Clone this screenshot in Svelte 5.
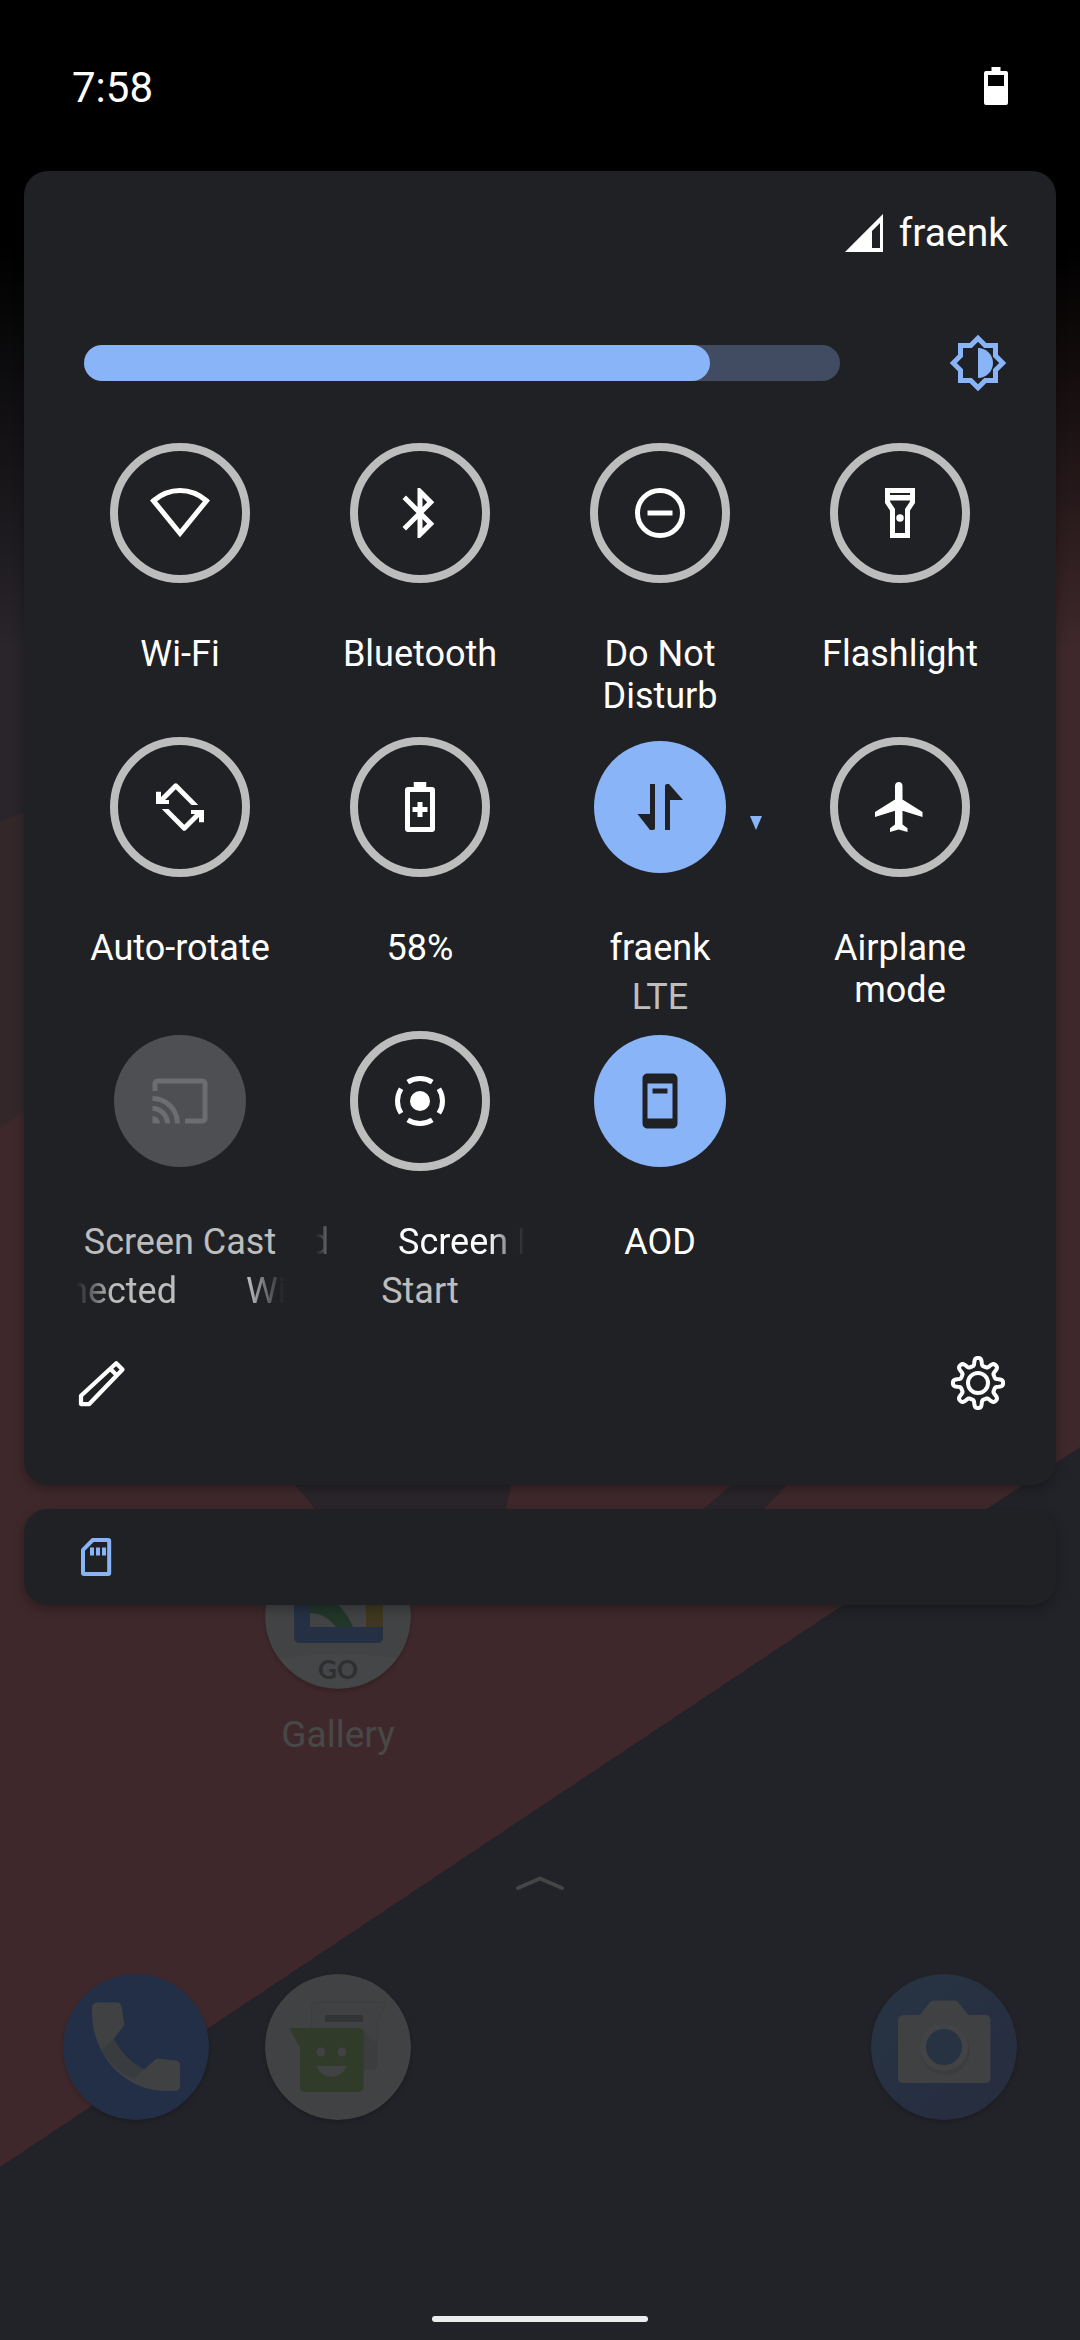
<script lang="ts">
  // A label too long for its tile scrolls; `tail` and `head` are the parts in view
  // of the copy going out and the copy coming in, `offset` is how far the tail reaches.
  type Marquee = { tail: string; head: string; offset: number };

  type Tile = {
    id: string;
    label: string;
    state: 'off' | 'on' | 'unavailable';
    secondary?: string;
    labelScroll?: Marquee;
    secondaryScroll?: Marquee;
    menu?: boolean;
  };

  const tiles: Tile[] = [
    { id: 'wifi', label: 'Wi-Fi', state: 'off' },
    { id: 'bluetooth', label: 'Bluetooth', state: 'off' },
    { id: 'dnd', label: 'Do Not Disturb', state: 'off' },
    { id: 'flashlight', label: 'Flashlight', state: 'off' },
    { id: 'rotate', label: 'Auto-rotate', state: 'off' },
    { id: 'battery', label: '58%', state: 'off' },
    { id: 'data', label: 'fraenk', secondary: 'LTE', state: 'on', menu: true },
    { id: 'airplane', label: 'Airplane mode', state: 'off' },
    {
      id: 'cast',
      label: 'Screen Cast',
      secondary: 'Wi-Fi not connected',
      secondaryScroll: { tail: 'nected', head: 'Wi', offset: 101 },
      state: 'unavailable'
    },
    {
      id: 'record',
      label: 'Screen Record',
      labelScroll: { tail: 'd', head: 'Screen R', offset: 13 },
      secondary: 'Start',
      state: 'off'
    },
    { id: 'aod', label: 'AOD', state: 'on' }
  ];

  let brightness = $state(82);

  // Eight-toothed gear outline, traced in polar coordinates round (30, 30)
  function gearPath(): string {
    const points: string[] = [];
    for (let i = 0; i < 320; i++) {
      const a = (i / 320) * Math.PI * 2;
      const r = 21.4 + 3.9 * Math.tanh(2.2 * (Math.cos(8 * a) - 0.2));
      points.push(`${(30 + r * Math.sin(a)).toFixed(2)} ${(30 - r * Math.cos(a)).toFixed(2)}`);
    }
    return `M${points.join('L')}Z`;
  }
  const gear = gearPath();
</script>

{#snippet tileIcon(id: string)}
  <svg class="icon" viewBox="0 0 24 24" aria-hidden="true">
    {#if id === 'wifi'}
      <path d="M1.4 7.1C4.3 4.6 8 3 12 3s7.7 1.6 10.6 4.1L12 20.1z" fill="none" stroke="currentColor" stroke-width="2" />
    {:else if id === 'bluetooth'}
      <path d="M17.71 7.71L12 2h-1v7.59L6.41 5 5 6.41 10.59 12 5 17.59 6.41 19 11 14.41V22h1l5.71-5.71-4.3-4.29zM13 5.83l1.88 1.88L13 9.59zm1.88 10.46L13 18.17v-3.76z" />
    {:else if id === 'dnd'}
      <circle cx="12" cy="12" r="9" fill="none" stroke="currentColor" stroke-width="2" />
      <path d="M7 11h10v2H7z" />
    {:else if id === 'flashlight'}
      <path d="M18 2H6v6l2 3v11h8V11l2-3zm-2 2v.8H8V4zm-2 6.4V20h-4v-9.600L8 7.400V7h8v.4z" />
      <circle cx="12" cy="14" r="1.500" />
    {:else if id === 'rotate'}
      <path d="M2.4 5.9h2V8l5.2-5.2a1 1 0 0 1 1.4 0l8.3 8.4h-2.7l-6.3-6.3L6 9.2h1.6v1.6H2.4z" />
      <path d="M2.4 5.9h2V8l5.2-5.2a1 1 0 0 1 1.4 0l8.3 8.4h-2.7l-6.3-6.3L6 9.2h1.6v1.6H2.4z" transform="rotate(180 12 12)" />
    {:else if id === 'battery'}
      <path d="M16.8 4h-2.3V2h-5v2H7.2C6.5 4 6 4.5 6 5.2v15.6c0 .7.5 1.2 1.2 1.2h9.6c.7 0 1.2-.5 1.2-1.2V5.2c0-.7-.5-1.2-1.2-1.2zM16 20H8V6h8z" />
      <path d="M11 10h2v2h2v2h-2v2h-2v-2H9v-2h2z" />
    {:else if id === 'data'}
      <path d="M8 2.8h2v17.6q0 .8-.8.8H8L3 14.8h5z" />
      <path d="M14 21.2V3.6q0-.8.8-.8h.8l5.6 6.4H16v12z" />
    {:else if id === 'airplane'}
      <path d="M21 16v-2l-8-5V3.500c0-.83-.67-1.500-1.500-1.500S10 2.670 10 3.500V9l-8 5v2l8-2.500V19l-2 1.500V22l3.500-1 3.500 1v-1.500L13 19v-5.500z" />
    {:else if id === 'cast'}
      <path d="M21 3H3c-1.1 0-2 .9-2 2v3h2V5h18v14h-7v2h7c1.1 0 2-.9 2-2V5c0-1.1-.9-2-2-2zM1 18v3h3c0-1.66-1.34-3-3-3zm0-4v2c2.76 0 5 2.24 5 5h2c0-3.87-3.13-7-7-7zm0-4v2c4.97 0 9 4.03 9 9h2c0-6.08-4.93-11-11-11z" />
    {:else if id === 'record'}
      <circle cx="12" cy="12" r="4" />
      <path d="M7.1 4.45A9 9 0 0 1 16.9 4.45M19.55 7.1A9 9 0 0 1 19.55 16.9M16.9 19.55A9 9 0 0 1 7.1 19.55M4.45 16.9A9 9 0 0 1 4.45 7.1" fill="none" stroke="currentColor" stroke-width="2" />
    {:else if id === 'aod'}
      <path fill-rule="evenodd" d="M7 1h10c1.1 0 2 .9 2 2v18c0 1.1-.9 2-2 2H7c-1.1 0-2-.9-2-2V3c0-1.1.9-2 2-2zm0 4v14h10V5zm2 2h6v2H9z" />
    {/if}
  </svg>
{/snippet}

{#snippet line(text: string, scroll: Marquee | undefined)}
  {#if scroll}
    <span class="marquee">
      <span class="outgoing" style="width: {scroll.offset}px">{scroll.tail}</span>
      <span>{scroll.head}</span>
    </span>
  {:else}
    <span class="text">{text}</span>
  {/if}
{/snippet}

<div class="screen">
  <svg class="wallpaper" viewBox="0 0 1080 2340" preserveAspectRatio="none" aria-hidden="true">
    <defs>
      <linearGradient id="fade" x1="0" y1="0" x2="0" y2="2340" gradientUnits="userSpaceOnUse">
        <stop offset="0.105" stop-color="#000" />
        <stop offset="0.278" stop-color="#000" stop-opacity="0" />
      </linearGradient>
    </defs>
    <path d="M0 0H1080V2340H0z" fill="#222328" />
    <path d="M0 0H1080V1447L0 2167z" fill="#3e282b" />
    <path d="M0 0H600V700L0 1128z" fill="#33272a" />
    <path d="M0 0H600V570L0 822z" fill="#29252b" />
    <path d="M280 1467H515L506 1509 500 1536H338z" fill="#29252a" />
    <path d="M731 1485L752 1467H804L764 1509 738 1536H672z" fill="#29252a" />
    <path d="M0 0H1080V700H0z" fill="url(#fade)" />
  </svg>

  <main class="launcher">
    <div class="apps">
      <a class="app gallery" href="#gallery">
        <svg viewBox="0 0 146 146" aria-hidden="true">
          <circle cx="73" cy="73" r="73" fill="#414344" />
          <path d="M29 29h89v66a5 5 0 0 1-5 5H34a5 5 0 0 1-5-5z" fill="#253045" />
          <path d="M45 45h56v39H45z" fill="#414344" />
          <path d="M101 29h17v55h-17z" fill="#3f371f" />
          <path d="M45 46C63 50 80 64 88 84H71C65 76 56 70 45 70z" fill="#22362a" />
          <path d="M14 115Q73 107 132 115A73 73 0 0 1 14 115z" fill="#444647" />
          <text x="73" y="136" text-anchor="middle" class="go">GO</text>
        </svg>
        <span>Gallery</span>
      </a>
    </div>
    <svg class="handle" viewBox="0 0 54 24" aria-hidden="true">
      <path d="M5 18L27 8.500 49 18" fill="none" stroke="#444547" stroke-width="4" stroke-linecap="round" stroke-linejoin="round" />
    </svg>
    <nav class="dock" aria-label="Favorites">
      <a class="app phone" href="#phone" aria-label="Phone">
        <svg viewBox="0 0 146 146" aria-hidden="true">
          <circle cx="73" cy="73" r="73" fill="#232f47" />
          <path d="M35 28.500H54q4 0 4.500 4L61.500 51 50.500 65Q62 86 81 95.500L93.500 84.500 113 86.500q4 .5 4 4.500v21q0 5-5 5H103C62 117 29 82 29 38v-4q0-5.500 6-5.500z" fill="#404142" />
          <path d="M38 76L50.500 65Q62 86 81 95.500L71 105.500Q50 96 38 76z" fill="#393c3e" />
        </svg>
      </a>
      <a class="app messages" href="#messages" aria-label="Messages">
        <svg viewBox="0 0 146 146" aria-hidden="true">
          <circle cx="73" cy="73" r="73" fill="#414243" />
          <path d="M51 28h70q1 0 .5 1.500L112 48v42q0 5-5 5H51q-4.500 0-4.500-5V33q0-5 4.500-5z" fill="#3f4142" stroke="#3c3e3f" />
          <path d="M60 41h38v7H60z" fill="#333435" />
          <path d="M98 56l14 14v20q0 5-5 5h-9z" fill="#3b3d3e" />
          <path d="M24.500 54H93q5.500 0 5.500 5v54q0 5-5 5H40q-5 0-5-5V74z" fill="#303b29" />
          <circle cx="56" cy="78" r="4.500" fill="#414243" />
          <circle cx="77" cy="78" r="4.500" fill="#414243" />
          <path d="M51.500 92h30Q77 103 66.500 103T51.500 92z" fill="#414243" />
        </svg>
      </a>
      <a class="app camera" href="#camera" aria-label="Camera">
        <svg viewBox="0 0 146 146" aria-hidden="true">
          <defs>
            <linearGradient id="lens" x1="0" y1="0" x2="1" y2="1">
              <stop offset="0.3" stop-color="#273242" />
              <stop offset="0.7" stop-color="#262e40" />
            </linearGradient>
          </defs>
          <circle cx="73" cy="73" r="73" fill="url(#lens)" />
          <path d="M33 41H48.500L59 28q1.500-1.500 3-1.500H84q2 0 3 1.500L97.500 41H114q5.500 0 5.500 5.500v57q0 5.500-5.500 5.500H33q-6 0-6-5.500v-57q0-5.500 6-5.500z" fill="#404142" />
          <circle cx="74" cy="76" r="25" fill="#3c3d3e" />
          <circle cx="73" cy="73" r="24" fill="#424344" />
          <circle cx="73" cy="73" r="18" fill="#273242" />
        </svg>
      </a>
    </nav>
    <div class="gesture"></div>
  </main>

  <div class="shade">
    <header class="status">
      <time>7:58</time>
      <svg class="battery" viewBox="0 0 24 38" aria-label="Battery 58%" role="img">
        <path fill-rule="evenodd" d="M7.500 0h9v4H22q2 0 2 2v30q0 2-2 2H2q-2 0-2-2V6q0-2 2-2H7.500zM4 8v11h16V8z" />
      </svg>
    </header>

    <section class="panel" aria-label="Quick settings">
      <div class="carrier">
        <svg viewBox="0 0 38 38" aria-hidden="true">
          <path fill-rule="evenodd" d="M0 38L38 0V38zM27 17V34H35V9z" />
        </svg>
        <span>fraenk</span>
      </div>

      <div class="brightness">
        <input type="range" min="0" max="100" bind:value={brightness} style="--level: {brightness / 100}" aria-label="Brightness" />
        <button class="plain accent" aria-label="Adaptive brightness">
          <svg class="icon" viewBox="0 0 24 24" aria-hidden="true">
            <path fill-rule="evenodd" d="M20 8.690V4h-4.690L12 .69 8.690 4H4v4.690L.69 12 4 15.310V20h4.690L12 23.310 15.310 20H20v-4.690L23.310 12zM18 14.480V18h-3.520L12 20.480 9.520 18H6v-3.520L3.520 12 6 9.520V6h3.520L12 3.520 14.480 6H18v3.520L20.480 12z" />
            <path d="M12 6v12c3.310 0 6-2.690 6-6s-2.690-6-6-6z" />
          </svg>
        </button>
      </div>

      <div class="tiles">
        {#each tiles as tile (tile.id)}
          <button
            class="tile {tile.state}"
            aria-label={tile.secondary ? `${tile.label}, ${tile.secondary}` : tile.label}
            aria-pressed={tile.state === 'on'}
            disabled={tile.state === 'unavailable'}
          >
            <span class="slot">
              <span class="disc">{@render tileIcon(tile.id)}</span>
              {#if tile.menu}
                <svg class="caret" viewBox="0 0 12 14" aria-hidden="true"><path d="M0 0H12L6 14z" /></svg>
              {/if}
            </span>
            <span class="label">{@render line(tile.label, tile.labelScroll)}</span>
            {#if tile.secondary}
              <span class="secondary">{@render line(tile.secondary, tile.secondaryScroll)}</span>
            {/if}
          </button>
        {/each}
      </div>

      <footer class="actions">
        <button class="plain" aria-label="Edit tiles">
          <svg class="icon" viewBox="0 0 24 24" aria-hidden="true">
            <path d="M3.600 20.400v-3.300L17.700 4.100 20.200 6.600 6.900 20.400zM15.300 6.300l2.600 2.600" fill="none" stroke="currentColor" stroke-width="1.700" stroke-linejoin="round" />
          </svg>
        </button>
        <button class="plain" aria-label="Settings">
          <svg class="icon" viewBox="0 0 60 60" aria-hidden="true">
            <path d={gear} fill="none" stroke="currentColor" stroke-width="4" stroke-linejoin="round" />
            <circle cx="30" cy="30" r="10" fill="none" stroke="currentColor" stroke-width="4" />
          </svg>
        </button>
      </footer>
    </section>

    <section class="notification" aria-label="Notifications">
      <svg viewBox="0 0 24 24" aria-hidden="true">
        <path d="M5.500 8.400L10.400 3.500H18.100q.5 0 .5.500V20q0 .5-.5.500H6q-.5 0-.5-.500z" fill="none" stroke="currentColor" stroke-width="2" stroke-linejoin="round" />
        <path d="M9 7.300h2v4H9zM12 7.300h2v4h-2zM15 7.300h2v4h-2z" />
      </svg>
    </section>
  </div>
</div>

<style>
  :global(body) {
    margin: 0;
    background: #222328;
  }

  .screen {
    position: relative;
    display: grid;
    min-height: 100vh;
    overflow: hidden;
    font-family: Roboto, 'Noto Sans', sans-serif;
    font-size: 36px;
    line-height: 42px;
    color: #fff;
  }

  svg {
    display: block;
    fill: currentColor;
  }

  .wallpaper {
    position: absolute;
    inset: 0;
    width: 100%;
    height: 100%;
  }

  .launcher,
  .shade {
    position: relative;
    grid-area: 1 / 1;
    min-width: 0;
    display: flex;
    flex-direction: column;
  }

  .launcher {
    justify-content: flex-end;
    padding-bottom: 18px;
  }

  .apps,
  .dock {
    display: grid;
    grid-template-columns: repeat(5, 1fr);
    padding: 0 35px;
  }

  .app {
    display: flex;
    flex-direction: column;
    align-items: center;
    gap: 25px;
    color: #484848;
    font-size: 37px;
    text-decoration: none;
  }

  .app svg {
    width: 146px;
    height: 146px;
    border-radius: 50%;
    box-shadow: 0 2px 4px rgba(0, 0, 0, 0.2);
  }

  .gallery {
    grid-column: 2;
  }

  .camera {
    grid-column: 5;
  }

  .go {
    font-family: Lato, sans-serif;
    font-size: 26px;
    font-weight: 700;
    fill: #2d2f31;
  }

  .handle {
    width: 54px;
    height: 24px;
    margin: 114px auto 80px;
  }

  .gesture {
    width: 20%;
    height: 6px;
    margin: 196px auto 0;
    border-radius: 3px;
    background: #ececee;
  }

  .shade {
    align-self: start;
    gap: 24px;
  }

  .status {
    box-sizing: border-box;
    height: 147px;
    display: flex;
    justify-content: space-between;
    align-items: flex-start;
    padding: 63px 72px 0;
    font-size: 42px;
    line-height: 50px;
  }

  .battery {
    width: 24px;
    height: 38px;
    margin-top: 4px;
  }

  .panel,
  .notification {
    margin: 0 24px;
    border-radius: 24px;
    background: #202124;
    box-shadow: 0 4px 12px rgba(0, 0, 0, 0.3);
  }

  .carrier {
    display: flex;
    justify-content: flex-end;
    align-items: center;
    gap: 16px;
    padding: 38px 48px 0;
    font-size: 39px;
    line-height: 48px;
  }

  .carrier svg {
    width: 38px;
    height: 38px;
  }

  .brightness {
    display: flex;
    align-items: center;
    gap: 108px;
    padding: 76px 48px 50px 60px;
  }

  input[type='range'] {
    flex: 1;
    min-width: 0;
    height: 36px;
    margin: 0;
    appearance: none;
    border-radius: 18px;
    background: linear-gradient(to right, #8ab4f8 calc(18px + (100% - 36px) * var(--level)), #414c63 0);
  }

  input[type='range']::-webkit-slider-thumb {
    appearance: none;
    width: 36px;
    height: 36px;
    border-radius: 50%;
    background: #8ab4f8;
  }

  button {
    border: 0;
    margin: 0;
    padding: 0;
    background: none;
    color: inherit;
    font: inherit;
  }

  .icon {
    width: 60px;
    height: 60px;
  }

  .accent {
    color: #8ab4f8;
  }

  .tiles {
    display: grid;
    grid-template-columns: repeat(4, 1fr);
    grid-auto-rows: minmax(294px, auto);
    padding: 0 36px;
  }

  .tile {
    min-width: 0;
    display: flex;
    flex-direction: column;
    align-items: center;
    padding: 0 16px;
  }

  .slot {
    position: relative;
    width: 140px;
    height: 140px;
    display: grid;
    place-items: center;
    margin-bottom: 50px;
  }

  .disc {
    box-sizing: border-box;
    width: 132px;
    height: 132px;
    display: grid;
    place-items: center;
    border-radius: 50%;
  }

  .off .disc {
    width: 140px;
    height: 140px;
    border: 8px solid #bdbdbd;
  }

  .on .disc {
    background: #8ab4f8;
    color: #202124;
  }

  .unavailable {
    color: #bdbdbd;
  }

  .unavailable .disc {
    background: #4e4f52;
    color: #6c6d6f;
  }

  .caret {
    position: absolute;
    left: 160px;
    top: 79px;
    width: 12px;
    height: 14px;
    color: #8ab4f8;
  }

  .label,
  .secondary {
    width: 100%;
    text-align: center;
  }

  .secondary {
    margin-top: 7px;
    color: #bdbdbd;
  }

  .text {
    display: block;
  }

  .marquee {
    display: flex;
    gap: 69px;
    overflow: hidden;
    white-space: nowrap;
    mask-image: linear-gradient(to right, transparent, #000 36px, #000 calc(100% - 36px), transparent);
  }

  .outgoing {
    flex: none;
    display: flex;
    justify-content: flex-end;
  }

  .actions {
    display: flex;
    justify-content: space-between;
    padding: 28px 48px 72px;
  }

  .notification {
    display: flex;
    align-items: center;
    padding: 24px 48px;
    color: #8ab4f8;
  }

  .notification svg {
    width: 48px;
    height: 48px;
  }
</style>
